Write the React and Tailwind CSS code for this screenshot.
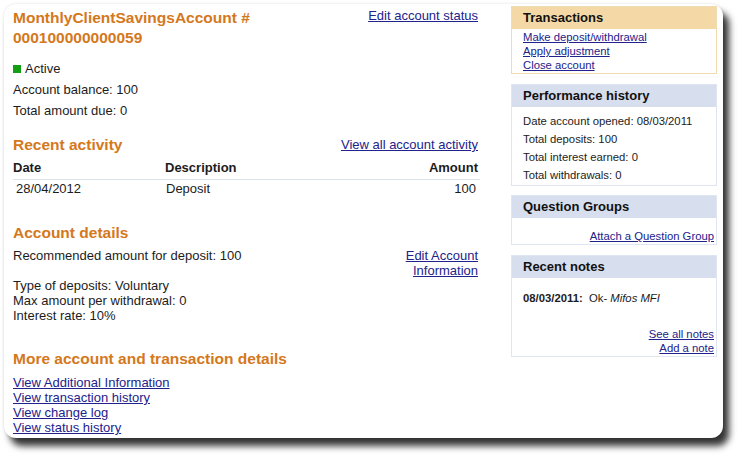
import React from 'react';

const orange = 'text-[#d4781c]';
const link = 'text-[#22228c] underline';

const SideBox = ({ title, tone = 'blue', children, className = '' }) => (
    <div className={`border ${tone === 'tan' ? 'border-[#f1dbb0]' : 'border-[#dfe5f1]'} ${className}`}>
        <div className={`h-[22px] px-[11px] text-[13px] font-bold leading-[22px] text-[#111] ${tone === 'tan' ? 'bg-[#f4d8a5]' : 'bg-[#d7deee]'}`}>
            {title}
        </div>
        {children}
    </div>
);

const App = () => {
    return (
        <div className="h-[462px] w-[750px] bg-white pl-[4px] pt-[4px] font-['Liberation_Sans',Arial,sans-serif] text-[#1c1c1c]">
            <div className="flex h-[434px] w-[719px] rounded-[12px] bg-white pl-[9px] pr-[5px] shadow-[0_0_3px_rgba(0,0,0,0.12),6px_8px_7px_rgba(0,0,0,0.8)]">
                {/* Main column */}
                <div className="w-[465px] pt-[4px]">
                    <div className="flex items-start justify-between">
                        <h1 className={`w-[300px] text-[15.5px] font-bold leading-[20px] ${orange}`}>
                            MonthlyClientSavingsAccount # 000100000000059
                        </h1>
                        <a href="#" className={`text-[13px] leading-[16px] ${link}`}>Edit account status</a>
                    </div>

                    <div className="mt-[10px] text-[13px] leading-[21px]">
                        <div className="flex items-center">
                            <span className="mr-[4px] inline-block h-[8px] w-[8px] bg-[#12a012]" />
                            Active
                        </div>
                        <div>Account balance: 100</div>
                        <div>Total amount due: 0</div>
                    </div>

                    <div className="mt-[14px] flex items-center justify-between">
                        <h2 className={`text-[15.5px] font-bold leading-[20px] ${orange}`}>Recent activity</h2>
                        <a href="#" className={`text-[13px] leading-[16px] ${link}`}>View all account activity</a>
                    </div>
                    <div className="mt-[4px] w-[467px] text-[13px]">
                        <div className="grid grid-cols-[152px_1fr_auto] border-b border-[#dde3ee] pb-[2px] font-bold leading-[18px] pr-[2px]">
                            <span>Date</span>
                            <span>Description</span>
                            <span>Amount</span>
                        </div>
                        <div className="grid grid-cols-[152px_1fr_auto] pt-[1px] leading-[16px] pl-[3px] pr-[4px]">
                            <span>28/04/2012</span>
                            <span className="-ml-[2px]">Deposit</span>
                            <span>100</span>
                        </div>
                    </div>

                    <h2 className={`mt-[26px] text-[15.5px] font-bold leading-[20px] ${orange}`}>Account details</h2>
                    <div className="mt-[5px] flex items-start justify-between text-[13px] leading-[15px]">
                        <span>Recommended amount for deposit: 100</span>
                        <a href="#" className={`text-right ${link}`}>Edit Account<br />Information</a>
                    </div>
                    <div className="text-[13px] leading-[15px]">
                        <div>Type of deposits: Voluntary</div>
                        <div>Max amount per withdrawal: 0</div>
                        <div>Interest rate: 10%</div>
                    </div>

                    <h2 className={`mt-[26px] text-[15.5px] font-bold leading-[20px] ${orange}`}>More account and transaction details</h2>
                    <div className="mt-[6px] flex flex-col items-start text-[13px] leading-[15px]">
                        <a href="#" className={link}>View Additional Information</a>
                        <a href="#" className={link}>View transaction history</a>
                        <a href="#" className={link}>View change log</a>
                        <a href="#" className={link}>View status history</a>
                    </div>
                </div>

                {/* Sidebar */}
                <div className="ml-[33px] flex w-[206px] flex-col gap-[9px] pt-[2px]">
                    <SideBox title="Transactions" tone="tan">
                        <div className="flex flex-col items-start px-[11px] py-[1px] text-[11.3px] leading-[14px]">
                            <a href="#" className={link}>Make deposit/withdrawal</a>
                            <a href="#" className={link}>Apply adjustment</a>
                            <a href="#" className={link}>Close account</a>
                        </div>
                    </SideBox>

                    <SideBox title="Performance history" className="mt-[1px]">
                        <div className="px-[11px] pt-[5px] pb-[1px] text-[11.3px] leading-[18px]">
                            <div>Date account opened: 08/03/2011</div>
                            <div>Total deposits: 100</div>
                            <div>Total interest earned: 0</div>
                            <div>Total withdrawals: 0</div>
                        </div>
                    </SideBox>

                    <SideBox title="Question Groups">
                        <div className="flex justify-end px-[2px] pt-[11px] pb-[1px] text-[11.3px] leading-[14px]">
                            <a href="#" className={link}>Attach a Question Group</a>
                        </div>
                    </SideBox>

                    <SideBox title="Recent notes" className="mt-[1px]">
                        <div className="px-[11px] pt-[13px] text-[11.3px] leading-[14px]">
                            <span className="font-bold">08/03/2011:</span>&nbsp; Ok- <i>Mifos MFI</i>
                        </div>
                        <div className="flex flex-col items-end px-[2px] pt-[22px] pb-[1px] text-[11.3px] leading-[14px]">
                            <a href="#" className={link}>See all notes</a>
                            <a href="#" className={link}>Add a note</a>
                        </div>
                    </SideBox>
                </div>
            </div>
        </div>
    );
};

export default App;
